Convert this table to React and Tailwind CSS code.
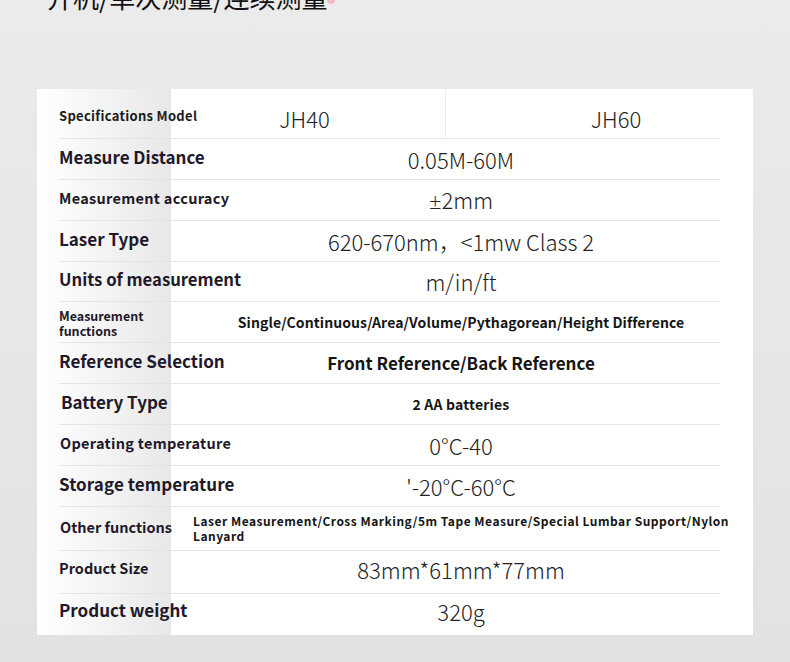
import React from 'react'

const cjk = { fontFamily: '"Noto Sans CJK SC", "Noto Sans", sans-serif' }

const rows = [
  { label: 'Measure Distance', lcls: 'text-[17px]', value: '0.05M-60M', h: 'h-[41px]' },
  { label: 'Measurement accuracy', lcls: 'text-[14.5px] tracking-[0.3px]', value: <><span className="font-['Open_Sans',sans-serif]">±</span>2mm</>, h: 'h-[41px]' },
  { label: 'Laser Type', lcls: 'text-[17px]', value: '620-670nm，<1mw Class 2', h: 'h-[41px]' },
  { label: 'Units of measurement', lcls: 'text-[16.7px]', value: 'm/in/ft', h: 'h-[40px]' },
  { label: 'Measurement\nfunctions', lcls: 'text-[12.5px] leading-[15px] whitespace-pre mt-[1px]', value: 'Single/Continuous/Area/Volume/Pythagorean/Height Difference', bold: 'text-[14px] tracking-[0.1px]', h: 'h-[41px]' },
  { label: 'Reference Selection', lcls: 'text-[17px]', value: 'Front Reference/Back Reference', bold: 'text-[17px]', h: 'h-[41px]' },
  { label: 'Battery Type', lcls: 'text-[17px] pl-[2px]', value: '2 AA batteries', bold: 'text-[14px] tracking-[0.2px]', h: 'h-[41px]' },
  { label: 'Operating temperature', lcls: 'text-[14.5px] tracking-[0.3px] pl-[1px]', value: '0°C-40', h: 'h-[41px]' },
  { label: 'Storage temperature', lcls: 'text-[17px] tracking-[0.1px]', value: "'-20°C-60°C", h: 'h-[41px]' },
]

const tail = [
  { label: 'Product Size', lcls: 'text-[14.5px]', value: '83mm*61mm*77mm', h: 'h-[43px] pb-[5px]' },
  { label: 'Product weight', lcls: 'text-[17px]', value: '320g', h: 'h-[41px] pb-[6px]', last: true },
]

function Row({ r }) {
  return (
    <div className={`flex items-center ${r.h} ${r.last ? '' : 'border-b border-[#e4e4e4]'}`}>
      <div className={`w-[143px] shrink-0 whitespace-nowrap font-bold text-[#21182a] -mt-[4px] ${r.lcls}`}>{r.label}</div>
      <div className="flex-1 flex justify-center">
        {r.bold
          ? <span className={`font-bold text-[#151515] whitespace-nowrap ${r.bold}`}>{r.value}</span>
          : <span className="font-light text-[22px] text-[#222] whitespace-nowrap">{r.value}</span>}
      </div>
    </div>
  )
}

export default function App() {
  return (
    <div style={cjk} className="w-[790px] h-[662px] overflow-hidden bg-linear-to-b from-[#ebebeb] to-[#e2e2e2]">
      <div className="pl-[47px] -mt-[17px] h-[106px] text-[26px] leading-[28px] text-[#111] flex items-start">
        <span>开机/单次测量/连续测量</span>
        <span className="w-[8px] h-[8px] rounded-full bg-[#f3b8c9] mt-[13px]" />
      </div>
      <div className="ml-[37px] w-[716px] h-[546px] pl-[22px] pr-[33px] bg-[linear-gradient(to_right,#ffffff_0px,#fbfbfb_25px,#e8e8e8_134px,#ffffff_134px)]">
        <div className="flex h-[50px] border-b border-[#e4e4e4]">
          <div className="w-[105px] shrink-0 whitespace-nowrap font-bold text-[13px] tracking-[0.3px] text-[#1b1b1b] flex items-center pt-[5px]">Specifications Model</div>
          <div className="w-[282px] shrink-0 border-r border-[#ececec] flex items-center justify-center pt-[9px] font-light text-[22px] text-[#222]">JH40</div>
          <div className="flex-1 pl-[66px] flex items-center justify-center pt-[9px] font-light text-[22px] text-[#222]">JH60</div>
        </div>
        {rows.map((r, i) => <Row key={i} r={r} />)}
        <div className="flex h-[44px] border-b border-[#e4e4e4] pt-[6px]">
          <div className="w-[134px] shrink-0 whitespace-nowrap font-bold text-[14.5px] text-[#21182a] pl-[1px] pt-[3px]">Other functions</div>
          <div className="w-[545px] shrink-0 font-bold text-[12px] leading-[15px] text-[#151515] tracking-[0.5px]">Laser Measurement/Cross Marking/5m Tape Measure/Special Lumbar Support/Nylon Lanyard</div>
        </div>
        {tail.map((r, i) => <Row key={i} r={r} />)}
      </div>
    </div>
  )
}
